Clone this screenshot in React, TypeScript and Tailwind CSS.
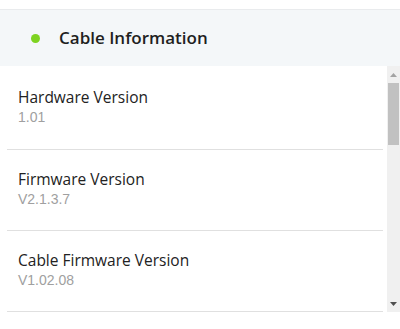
const items = [
  { label: "Hardware Version", value: "1.01" },
  { label: "Firmware Version", value: "V2.1.3.7" },
  { label: "Cable Firmware Version", value: "V1.02.08" },
];

function FakeScrollbar() {
  return (
    <div className="w-[13px] shrink-0 bg-[#f0f0f0] flex flex-col items-center">
      <div className="h-[17px] w-full flex items-center justify-center">
        <svg width="7" height="4" viewBox="0 0 7 4">
          <path d="M3.5 0 L7 4 L0 4 Z" fill="#a3a3a3" />
        </svg>
      </div>
      <div className="w-[11px] h-[62px] bg-[#c1c1c1]" />
      <div className="flex-1" />
      <div className="h-[17px] w-full flex items-center justify-center">
        <svg width="7" height="4" viewBox="0 0 7 4">
          <path d="M0 0 L7 0 L3.5 4 Z" fill="#505050" />
        </svg>
      </div>
    </div>
  );
}

export default function App() {
  return (
    <div className="w-[400px] h-[329px] bg-white overflow-hidden font-['Open_Sans','Liberation_Sans',sans-serif]">
      <div className="h-[9px]" />
      {/* Header */}
      <div className="h-[57px] bg-[#f4f7f9] border-t border-[#e9ebed] flex items-center pl-[31px]">
        <span className="w-[9px] h-[9px] rounded-full bg-[#7ed321]" />
        <span className="ml-[19px] text-[17px] font-semibold text-[#1f1f1f]">Cable Information</span>
      </div>

      {/* List + scrollbar */}
      <div className="h-[246px] flex">
        <div className="flex-1 overflow-hidden pl-[7px] pr-[4px]">
          {items.map((it, i) => (
            <div
              key={it.label}
              className={`${i === 0 ? "h-[84px] pt-[21px]" : "h-[81px] pt-[19px]"} border-b border-[#e0e0e0] pl-[11px]`}
            >
              <div className="text-[15.5px] leading-[20px] text-[#222]">{it.label}</div>
              <div className="mt-[1px] text-[14px] leading-[18px] text-[#a0a0a0] font-['Liberation_Sans',sans-serif]">{it.value}</div>
            </div>
          ))}
        </div>
        <FakeScrollbar />
      </div>
    </div>
  );
}
